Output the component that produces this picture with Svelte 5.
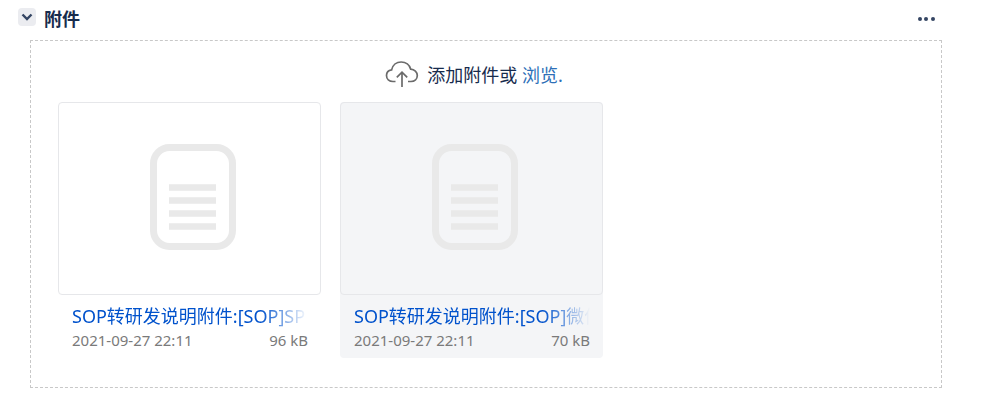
<script>
  let files = [
    { name: "SOP转研发说明附件:[SOP]SP", date: "2021-09-27 22:11", size: "96 kB", hover: false },
    { name: "SOP转研发说明附件:[SOP]微信", date: "2021-09-27 22:11", size: "70 kB", hover: true }
  ];
</script>

<div class="attachments">
  <div class="header">
    <button class="toggle" aria-label="折叠">
      <svg width="12" height="8" viewBox="0 0 12 8">
        <path d="M1.5 1.5 L6 6 L10.5 1.5" fill="none" stroke="#344563" stroke-width="2.4" />
      </svg>
    </button>
    <h2>附件</h2>
    <div class="more" aria-label="更多"><i></i><i></i><i></i></div>
  </div>

  <div class="dropzone">
    <div class="hint">
      <svg class="cloud" width="34" height="28" viewBox="0 0 34 28">
        <path d="M10.5 21.5 H8 C4.2 21.5 1.5 19 1.5 15.6 C1.5 12.6 3.6 10.3 6.6 9.9 C7.6 5.2 11.4 2 16.2 2 C20.8 2 24.6 4.9 25.7 9.2 C29.4 9.4 32.3 12.1 32.3 15.6 C32.3 19 29.6 21.5 26 21.5 H23" fill="none" stroke="#6b6b6b" stroke-width="1.7" />
        <path d="M17 27 V12.5 M11.8 17.4 L17 12.2 L22.2 17.4" fill="none" stroke="#6b6b6b" stroke-width="1.7" />
      </svg>
      <span>添加附件或 <a href="#browse">浏览.</a></span>
    </div>

    <div class="cards">
      {#each files as file}
        <div class="card" class:hover={file.hover}>
          <div class="thumb">
            <svg width="86" height="106" viewBox="0 0 86 106">
              <rect x="3.5" y="3.5" width="79" height="99" rx="16" fill="none" stroke="#e9e9e9" stroke-width="7" />
              <path d="M19 43.5 H66 M19 56.5 H66 M19 69.5 H66 M19 82.5 H66" stroke="#e9e9e9" stroke-width="6.5" />
            </svg>
          </div>
          <div class="meta">
            <div class="name">{file.name}</div>
            <div class="info"><span>{file.date}</span><span>{file.size}</span></div>
          </div>
        </div>
      {/each}
    </div>
  </div>
</div>

<style>
  :global(body) {
    margin: 0;
    background: #fff;
  }

  .attachments {
    width: 999px;
    height: 406px;
    box-sizing: border-box;
    padding: 8px 57px 0 18px;
    font-family: "Noto Sans", "Noto Sans CJK SC", sans-serif;
  }

  .header {
    display: flex;
    align-items: center;
    height: 22px;
    margin-bottom: 10px;
  }

  .toggle {
    width: 18px;
    height: 18px;
    padding: 0;
    border: 0;
    border-radius: 4px;
    background: #ebecf0;
    display: flex;
    align-items: center;
    justify-content: center;
    margin-bottom: 4px;
  }

  h2 {
    margin: 0 0 0 8px;
    font-size: 18px;
    line-height: 22px;
    font-weight: 700;
    color: #172b4d;
  }

  .more {
    margin-left: auto;
    margin-right: 7px;
    display: flex;
    gap: 2.7px;
  }

  .more i {
    width: 4px;
    height: 4px;
    border-radius: 50%;
    background: #344563;
  }

  .dropzone {
    margin-left: 12px;
    height: 348px;
    box-sizing: border-box;
    border: 1px dashed #c8c8c8;
    padding: 18px 27px 0;
  }

  .hint {
    display: flex;
    align-items: center;
    justify-content: center;
    gap: 8px;
    height: 29px;
    margin-bottom: 14px;
    padding-right: 24px;
    font-size: 18px;
    color: #172b4d;
  }

  .hint a {
    color: #2e6fb7;
    text-decoration: none;
  }

  .cards {
    display: flex;
    gap: 19px;
  }

  .card {
    width: 263px;
    height: 256px;
    border-radius: 4px;
  }

  .card.hover {
    background: #f4f5f7;
  }

  .thumb {
    height: 193px;
    box-sizing: border-box;
    border: 1px solid #e6e7ea;
    border-radius: 4px;
    padding: 0 0 3px 7px;
    display: flex;
    align-items: center;
    justify-content: center;
  }

  .hover .thumb {
    background: #f4f5f7;
  }

  .meta {
    padding: 9px 13px 0 14px;
  }

  .name {
    font-size: 18px;
    line-height: 24px;
    color: #0052cc;
    white-space: nowrap;
    overflow: hidden;
    -webkit-mask-image: linear-gradient(to right, #000 80%, transparent 100%);
    mask-image: linear-gradient(to right, #000 80%, transparent 100%);
  }

  .info {
    display: flex;
    justify-content: space-between;
    margin-top: 2px;
    font-size: 15px;
    line-height: 20px;
    color: #7a7a7a;
  }
</style>
